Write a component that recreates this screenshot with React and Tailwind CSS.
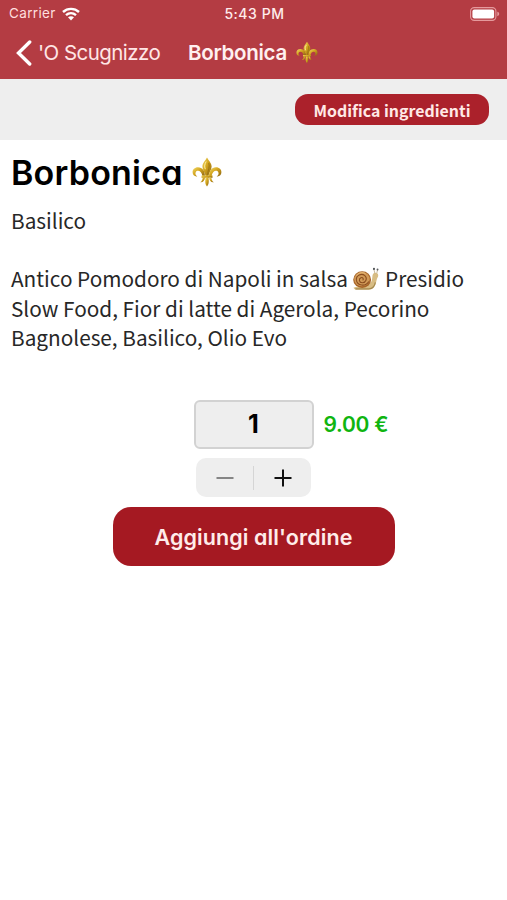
import React from 'react';

const FleurDeLis = ({ className }) => (
  <svg viewBox="0 0 30 30" className={className} aria-hidden="true">
    <defs>
      <linearGradient id="gold" x1="0" y1="0" x2="1" y2="1">
        <stop offset="0" stopColor="#f3dc6a" />
        <stop offset="0.45" stopColor="#d3a51f" />
        <stop offset="1" stopColor="#8a6210" />
      </linearGradient>
    </defs>
    <g fill="url(#gold)">
      <path d="M15 0.5C13.5 3.5 10.4 6 10.4 9.6C10.4 13 13 15.5 13.6 19H16.4C17 15.5 19.6 13 19.6 9.6C19.6 6 16.5 3.5 15 0.5Z" />
      <path d="M12.9 19C13 14 10.5 10.2 6 10.2C2.6 10.2 0.5 12.5 0.6 15.3C0.7 18 2.5 19.8 5.3 19.4C3.6 18.4 3 16.8 3.7 15.3C4.6 13.5 7.1 13.4 8.6 15C9.7 16.2 10.2 17.6 10.3 19Z" />
      <path d="M17.1 19C17 14 19.5 10.2 24 10.2C27.4 10.2 29.5 12.5 29.4 15.3C29.3 18 27.5 19.8 24.7 19.4C26.4 18.4 27 16.8 26.3 15.3C25.4 13.5 22.9 13.4 21.4 15C20.3 16.2 19.8 17.6 19.7 19Z" />
      <path d="M9.5 18.4H20.5V20.8H9.5Z" />
      <path d="M13.5 20.5H16.5C16.6 23 17.6 26.5 15 29.5C12.4 26.5 13.4 23 13.5 20.5Z" />
      <path d="M10.7 20.5H13C12.8 23.4 11.2 25.6 8.2 25.2C9.8 24.3 10.5 22.6 10.7 20.5Z" />
      <path d="M19.3 20.5H17C17.2 23.4 18.8 25.6 21.8 25.2C20.2 24.3 19.5 22.6 19.3 20.5Z" />
    </g>
    <path d="M14.2 4.5C12.8 7 12.1 9 13.3 12.2" fill="none" stroke="#fff2a0" strokeWidth="1" />
    <path d="M16.8 6C18 10 16 13 15.6 18" fill="none" stroke="#96700f" strokeWidth="0.8" />
  </svg>
);

const Snail = ({ className }) => (
  <svg viewBox="0 0 28 26" className={className} aria-hidden="true">
    <path
      d="M1 21.5C6 19.5 12 20 16 19C19 17.5 20.4 14.5 20.6 10.5C20.7 7 22 5.8 24.2 6C26.4 6.2 27.2 8 26.5 10.2C25.3 12 25 14 24.3 17C23.3 21 21 23.5 16.5 23.7H5C3 23.7 1.5 22.8 1 21.5Z"
      fill="#d8bd84"
    />
    <path d="M3 22.8H17C21 22.5 23 20 23.7 16" fill="none" stroke="#a58a50" strokeWidth="1.2" />
    <path d="M23.2 6.5L22.2 2.5M25.2 6.5L26 3" stroke="#bfae8c" strokeWidth="0.9" fill="none" />
    <circle cx="22.3" cy="2" r="1.1" fill="#4b4e51" />
    <circle cx="26" cy="2.6" r="1" fill="#5a5d60" />
    <ellipse cx="10" cy="13.2" rx="9.3" ry="8.7" fill="#a86529" />
    <ellipse cx="9.8" cy="12.7" rx="8" ry="7.4" fill="#d19a58" />
    <path
      d="M16.9 15C13.5 20.7 4.8 19.8 4 13.7C3.5 8.7 9.3 6 12.8 9C15.9 11.8 13.8 16.6 10 16.4C6.7 16.2 6.2 12.2 8.7 11.1C10.8 10.4 12 12.8 10.5 13.8"
      fill="none"
      stroke="#8a4d1f"
      strokeWidth="1.1"
    />
    <path d="M4.3 9C6.2 5.8 10.5 5.2 13.4 6.9" fill="none" stroke="#ebc07e" strokeWidth="1" />
  </svg>
);

const StatusBar = () => (
  <div className="grid h-[27px] grid-cols-3 items-center pl-[9px] pr-[7px] text-[13.5px] text-[#ffdfdf]">
    <div className="flex items-center gap-[6px]">
      <span className="tracking-[0.35px]">Carrier</span>
      <svg viewBox="0 0 18 14" className="h-[14px] w-[18px]" aria-hidden="true">
        <g fill="none" stroke="#fff" strokeWidth="2.4">
          <path d="M1 5C5.5 0.8 12.5 0.8 17 5" />
          <path d="M4 8.2C7 5.5 11 5.5 14 8.2" />
        </g>
        <path d="M6 10.3C7.8 8.8 10.2 8.8 12 10.3L9 13.4Z" fill="#fff" />
      </svg>
    </div>
    <span className="pb-px text-center text-[14px] font-medium tracking-[0.55px] text-[#ffecec]">5:43 PM</span>
    <svg viewBox="0 0 30 14" className="h-[14px] w-[30px] justify-self-end" aria-hidden="true">
      <rect x="0.6" y="0.6" width="25.3" height="12.8" rx="3.6" fill="none" stroke="#e59a9d" strokeWidth="1.1" />
      <rect x="2.4" y="2.4" width="21.7" height="9.2" rx="2" fill="#fff" />
      <path d="M27.3 4.8C29.8 5.4 29.8 8.6 27.3 9.2Z" fill="#e59a9d" />
    </svg>
  </div>
);

const NavBar = () => (
  <div className="flex h-[52px] items-center pl-[16px] text-[20.5px]">
    <svg viewBox="0 0 16 26" className="h-[26px] w-[16px]" aria-hidden="true">
      <path d="M13.7 2L2.5 13L13.7 24" fill="none" stroke="#fff" strokeWidth="3.4" strokeLinecap="round" />
    </svg>
    <span className="ml-[6px] w-[150px] tracking-[-0.56px] whitespace-nowrap text-[#ffe6e6]">'O Scugnizzo</span>
    <span className="w-[108px] tracking-[-0.3px] whitespace-nowrap font-semibold text-[#fff0f0]">Borbonica</span>
    <FleurDeLis className="mb-[2px] h-[23px] w-[22px]" />
  </div>
);

export default function App() {
  return (
    <div className="min-h-[900px] w-[507px] bg-white font-['Inter',sans-serif] text-black">
      <header className="h-[79px] bg-[#b43c43]">
        <StatusBar />
        <NavBar />
      </header>

      <div className="flex h-[61px] items-center justify-end bg-[#eeeeee] pr-[18px]">
        <button className="flex h-[31px] w-[194px] items-center justify-center rounded-[13px] bg-[#ab212b] pt-[2px] font-['Noto_Sans_CJK_SC',sans-serif] text-[15.9px] font-bold whitespace-nowrap text-[#ffe9e6]">
          Modifica ingredienti
        </button>
      </div>

      <main>
        <section className="px-[11px] pt-[11px]">
          <h1 className="flex h-[42px] items-center text-[34px] font-semibold tracking-[0.2px] [font-feature-settings:'cv11']">
            <span className="w-[181px] whitespace-nowrap">Borbonica</span>
            <FleurDeLis className="h-[30px] w-[30px]" />
          </h1>
          <div className="mt-[13px] font-['Noto_Sans_CJK_SC',sans-serif] text-[20.75px] leading-[29.3px] whitespace-nowrap text-[#272727]">
            <p>Basilico</p>
            <p className="mt-[29px]">
              Antico Pomodoro di Napoli in salsa <Snail className="inline-block h-[25px] w-[28px] align-[-5px]" /> Presidio
            </p>
            <p>Slow Food, Fior di latte di Agerola, Pecorino</p>
            <p>Bagnolese, Basilico, Olio Evo</p>
          </div>
        </section>

        {/* Quantity and price */}
        <section className="mt-[48px] flex flex-col items-center">
          <div className="grid w-full grid-cols-[1fr_120px_1fr] items-center">
            <div className="col-start-2 flex h-[49px] items-center justify-center rounded-[6px] border-2 border-[#d2d2d2] bg-[#eeeeee] text-[25px] font-bold">
              1
            </div>
            <span className="pt-px pl-[10px] text-[21px] font-semibold tracking-[-0.25px] whitespace-nowrap text-[#10b510]">9.00 €</span>
          </div>

          <div className="mt-[9px] flex h-[39px] w-[115px] items-center rounded-[10px] bg-[#eeeeee]">
            <button className="flex flex-1 justify-center" aria-label="Meno">
              <svg viewBox="0 0 18 18" className="size-[18px]">
                <path d="M0.5 9H17.5" stroke="#858585" strokeWidth="2" />
              </svg>
            </button>
            <span className="h-[24px] w-px bg-[#d5d5d5]" />
            <button className="flex flex-1 justify-center" aria-label="Più">
              <svg viewBox="0 0 18 18" className="size-[18px]">
                <path d="M0.5 9H17.5M9 0.5V17.5" stroke="#111" strokeWidth="2" />
              </svg>
            </button>
          </div>

          <button className="mt-[10px] flex h-[59px] w-[282px] items-center justify-center rounded-[18px] bg-[#a51922] text-[21.5px] font-semibold tracking-[0.1px] whitespace-nowrap text-[#ffecea] [font-feature-settings:'cv11']">
            Aggiungi all'ordine
          </button>
        </section>
      </main>
    </div>
  );
}
